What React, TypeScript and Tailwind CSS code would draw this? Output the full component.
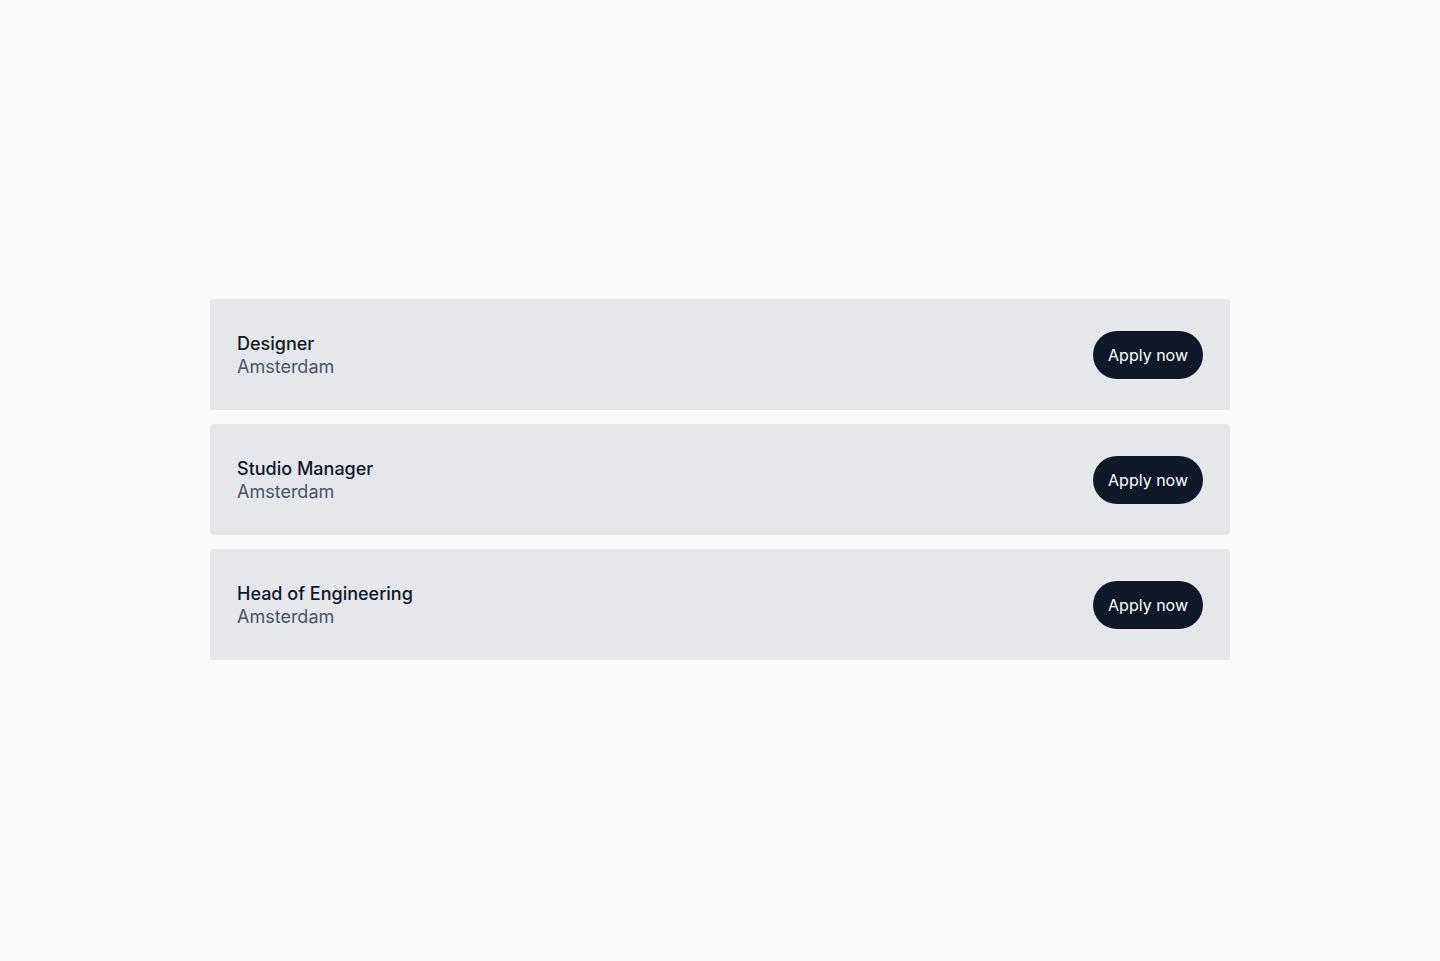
const jobs = [
  { title: "Designer", location: "Amsterdam" },
  { title: "Studio Manager", location: "Amsterdam" },
  { title: "Head of Engineering", location: "Amsterdam" },
];

export default function App() {
  return (
    <div className="min-h-screen bg-gray-50 flex items-center justify-center pb-0.5 font-['Inter',sans-serif]">
      <ul className="w-[1020px] flex flex-col gap-3.5">
        {jobs.map((job) => (
          <li
            key={job.title}
            className="bg-gray-200 rounded-[3px] px-[27px] py-[31.5px] flex items-center justify-between"
          >
            <div className="flex flex-col">
              <p className="text-lg leading-6 font-medium text-gray-900">{job.title}</p>
              <p className="text-lg leading-[22px] text-gray-600">{job.location}</p>
            </div>
            <button className="h-12 px-[15px] rounded-full bg-gray-900 text-white text-base font-normal">
              Apply now
            </button>
          </li>
        ))}
      </ul>
    </div>
  );
}
